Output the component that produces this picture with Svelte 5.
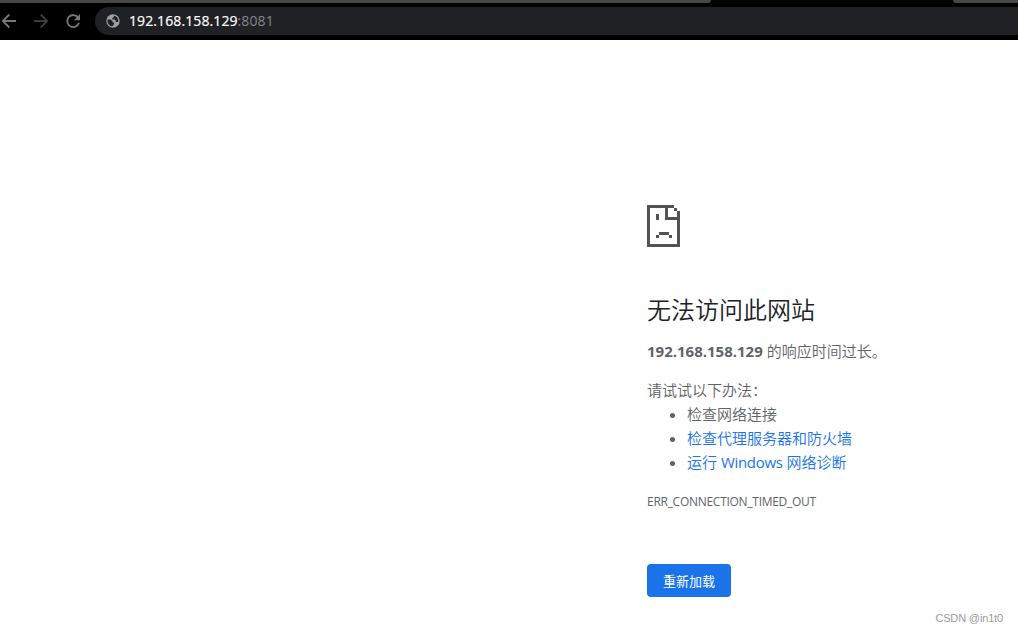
<script lang="ts">
	const host = '192.168.158.129';
	const port = '8081';
</script>

<div class="window">
	<header>
		<div class="tabs">
			<span class="tab"></span>
			<span class="tab tab-right"></span>
		</div>
		<div class="toolbar">
			<svg class="back" viewBox="0 0 16 16" width="16" height="16">
				<path d="M16 8H3M9.3 1.5L2.8 8l6.5 6.5" />
			</svg>
			<svg class="forward" viewBox="0 0 16 16" width="16" height="16">
				<path d="M1 8h13M7.7 1.5L14.2 8l-6.5 6.5" />
			</svg>
			<svg class="reload" viewBox="0 0 16 16" width="16" height="16">
				<path d="M13.2 4.6A6 6 0 1 0 14 9.8" />
				<path class="solid" d="M15 1v6.2H8.8z" />
			</svg>
			<div class="omnibox">
				<svg class="globe" viewBox="0 0 14 14" width="14" height="14">
					<circle cx="7" cy="7" r="6.7" />
					<path d="M1.7 5.4h2.8l2 1.7v1.3h1.6v1.6l-1.7 2.3C3.2 12.2 1 9 1.7 5.4zM8 1.7v1.2L6.4 4.1v1.5h2.3l1.1 1.2v1.1h2.4C12.8 4.7 10.6 2 8 1.7z" />
				</svg>
				<span class="host">{host}</span><span class="port">:{port}</span>
			</div>
		</div>
	</header>

	<main>
		<svg class="sad" viewBox="0 0 33 42" width="33" height="42" shape-rendering="crispEdges">
			<path d="M0 0h27v3h-6v9h9V6h3v36H0zM3 3v36h27V15H18V3zM27 3h3v3h-3zM9 9h3v6H9zM12 27h10v3H12zM9 30h3v3H9zM22 30h3v3h-3z" fill-rule="evenodd" />
		</svg>
		<h1>无法访问此网站</h1>
		<p class="summary"><strong>{host}</strong> 的响应时间过长。</p>
		<div class="suggestions">
			<p>请试试以下办法：</p>
			<ul>
				<li>检查网络连接</li>
				<li><a href="#proxy">检查代理服务器和防火墙</a></li>
				<li><a href="#diagnose">运行 <span class="latin">Windows</span> 网络诊断</a></li>
			</ul>
		</div>
		<div class="error-code">ERR_CONNECTION_TIMED_OUT</div>
		<button>重新加载</button>
	</main>

	<footer>CSDN @in1t0</footer>
</div>

<style>
	.window {
		position: relative;
		height: 632px;
		overflow: hidden;
		background: #fff;
		color: #5f6368;
		font-family: 'Open Sans', 'Noto Sans CJK SC', sans-serif;
	}

	header {
		height: 40px;
		background: #000;
	}

	.tabs {
		display: flex;
		justify-content: space-between;
		height: 7px;
	}

	.tab {
		width: 711px;
		height: 3px;
		background: #484848;
		border-bottom-right-radius: 4px;
	}

	.tab-right {
		width: 65px;
		border-radius: 0 0 0 4px;
	}

	.toolbar {
		display: flex;
		align-items: center;
		height: 28px;
	}

	.toolbar svg {
		flex: none;
		fill: none;
		stroke: #777;
		stroke-width: 1.8;
	}

	.toolbar .forward {
		margin-left: 17px;
		stroke: #3c3c3c;
	}

	.toolbar .reload {
		margin-left: 16px;
	}

	.toolbar .solid {
		fill: #777;
		stroke: none;
	}

	.omnibox {
		display: flex;
		flex: 1;
		align-items: center;
		height: 28px;
		margin-left: 14px;
		padding-left: 11px;
		background: #202124;
		border-radius: 14px 0 0 14px;
		font-size: 14px;
		line-height: 26px;
	}

	.omnibox .globe {
		margin-right: 9px;
		stroke: none;
	}

	.globe circle {
		fill: #9aa0a6;
	}

	.globe path {
		fill: #202124;
	}

	.omnibox span {
		padding-bottom: 1px;
	}

	.host {
		color: #fff;
		letter-spacing: 0.1px;
		-webkit-text-stroke: 0.2px #fff;
	}

	.port {
		color: #80868b;
		letter-spacing: 0.1px;
	}

	main {
		margin-left: 647px;
		padding-top: 165px;
		font-size: 15px;
		line-height: 24px;
	}

	.sad {
		display: block;
		fill: #535353;
	}

	h1 {
		margin: 47px 0 15px;
		color: #202124;
		font-family: 'Noto Sans CJK SC', sans-serif;
		font-size: 24px;
		font-weight: 350;
		line-height: 30px;
	}

	p,
	ul {
		margin: 0;
		font-weight: 350;
	}

	strong {
		font-weight: 700;
		letter-spacing: 0;
	}

	.latin {
		font-weight: 400;
		letter-spacing: -0.3px;
	}

	.suggestions {
		margin-top: 15px;
	}

	ul {
		padding-left: 40px;
	}

	a {
		color: #1a73e8;
		text-decoration: none;
	}

	.error-code {
		margin-top: 16px;
		font-size: 12px;
		letter-spacing: -0.28px;
	}

	button {
		display: block;
		width: 84px;
		height: 33px;
		margin-top: 50px;
		padding: 0;
		border: 0;
		border-radius: 4px;
		background: #1a73e8;
		color: #fff;
		font: 400 13px 'Noto Sans CJK SC', sans-serif;
	}

	footer {
		position: absolute;
		right: 15px;
		bottom: 6px;
		color: #999;
		font: 11px/16px 'Liberation Sans', sans-serif;
		letter-spacing: -0.15px;
	}
</style>
